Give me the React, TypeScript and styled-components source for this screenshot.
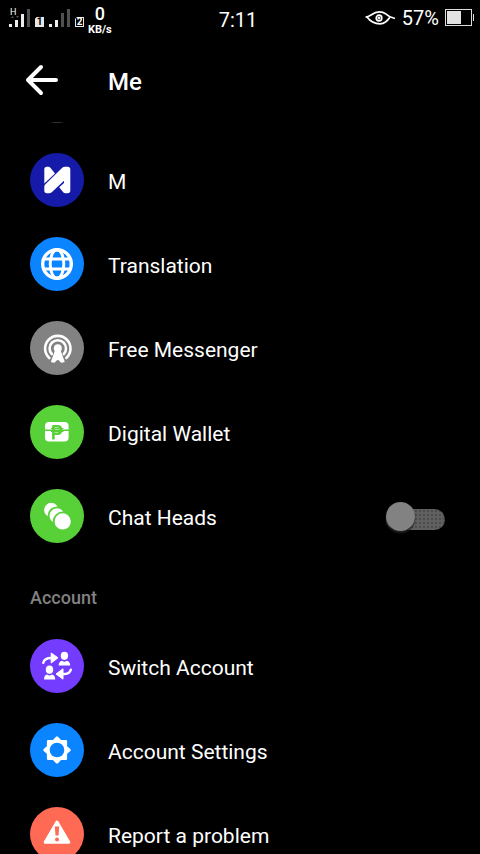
import React, { useState } from 'react';
import styled, { createGlobalStyle } from 'styled-components';

const GlobalStyle = createGlobalStyle`
  * { box-sizing: border-box; }
  body {
    margin: 0;
    background: #000;
    color: #fff;
    font-family: Roboto, "Liberation Sans", sans-serif;
  }
  button, input { font: inherit; color: inherit; margin: 0; }
`;

const Screen = styled.div`
  display: flex;
  flex-direction: column;
  height: 100vh;
  overflow: hidden;
`;

const StatusBar = styled.div`
  flex: none;
  display: grid;
  grid-template-columns: 1fr auto 1fr;
  align-items: center;
  height: 40px;
  padding: 0 6px 0 8px;
`;

const StatusGroup = styled.div<{ $end?: boolean }>`
  display: flex;
  align-items: center;
  justify-content: ${(p) => (p.$end ? 'flex-end' : 'flex-start')};
  gap: ${(p) => (p.$end ? '6px' : '4px')};
  height: 36px;
  align-self: start;
`;

const StatusText = styled.span`
  font-size: 20px;
  line-height: 24px;
`;

const Clock = styled(StatusText)`
  padding-right: 6px;
`;

const Signal = styled.span`
  position: relative;
  display: flex;
`;

const NetworkType = styled.span`
  position: absolute;
  left: 2px;
  top: -2px;
  font-size: 9px;
  line-height: 10px;
`;

const SimBadge = styled.span<{ $filled?: boolean }>`
  align-self: flex-end;
  width: 9px;
  margin-bottom: 9px;
  border: 1px solid #e8e8e8;
  background: ${(p) => (p.$filled ? '#e8e8e8' : '#000')};
  color: ${(p) => (p.$filled ? '#000' : '#fff')};
  font-size: 10px;
  font-weight: 700;
  line-height: 8px;
  text-align: center;
  clip-path: polygon(2px 0, 100% 0, 100% 100%, 0 100%, 0 2px);
`;

const NetSpeed = styled.span`
  display: flex;
  flex-direction: column;
  align-items: center;
  align-self: flex-start;
  padding-top: 3px;
  font-weight: 700;
  font-size: 11px;
  line-height: 12px;
`;

const NetSpeedValue = styled.span`
  font-size: 18px;
  font-weight: 500;
  line-height: 22px;
  margin-bottom: -2px;
`;

const NetSpeedUnit = styled.span`
  padding-top: 1px;
`;

const Header = styled.header`
  flex: none;
  display: flex;
  align-items: center;
  gap: 48px;
  height: 82px;
  padding: 0 24px;
`;

const BackButton = styled.button`
  display: flex;
  width: 36px;
  padding: 0;
  border: 0;
  background: none;
`;

const Title = styled.h1`
  margin: 2px 0 0;
  font-size: 24px;
  font-weight: 500;
  line-height: 28px;
`;

const List = styled.main`
  flex: 1;
  min-height: 0;
  overflow-y: auto;
  scrollbar-width: none;
`;

const ScrolledRow = styled.div`
  display: flex;
  align-items: flex-end;
  height: 16px;
  padding: 0 30px 15px;
  overflow: hidden;
`;

const rowStyles = `
  display: flex;
  align-items: center;
  gap: 24px;
  width: 100%;
  height: 84px;
  padding: 0 35px 0 30px;
  border: 0;
  background: none;
  text-align: left;
  cursor: pointer;
`;

const RowButton = styled.button`${rowStyles}`;
const RowLabel = styled.label`${rowStyles}`;

const RowText = styled.span`
  flex: 1;
  padding-top: 4px;
  font-size: 21px;
  line-height: 24px;
`;

const Disc = styled.span<{ $color: string }>`
  flex: none;
  display: flex;
  width: 54px;
  height: 54px;
  border-radius: 50%;
  background: ${(p) => p.$color};
`;

const SectionTitle = styled.h2`
  margin: 0;
  padding: 28px 30px 14px;
  color: #828282;
  font-size: 18px;
  font-weight: 500;
  line-height: 24px;
`;

const Switch = styled.input`
  appearance: none;
  flex: none;
  display: flex;
  align-items: center;
  width: 59px;
  height: 21px;
  margin-top: 6px;
  border-radius: 11px;
  background: radial-gradient(circle, #484848 20%, #606060 50%) 0 0 / 4px 4px;
  cursor: pointer;

  &::before {
    content: '';
    width: 29px;
    height: 29px;
    margin-top: -5px;
    border-radius: 50%;
    background: #828282;
    box-shadow: 0 2px 2px #222;
  }
  &:checked { background: #14539a; justify-content: flex-end; }
  &:checked::before { background: #0a84ff; }
`;

const Icon = ({ children }: { children: React.ReactNode }) => (
  <svg width="54" height="54" viewBox="0 0 54 54" fill="none" stroke="none" aria-hidden="true">
    {children}
  </svg>
);

const MIcon = () => (
  <Icon>
    <path fill="#fff" d="M14.300 16.500Q14.300 13.700 17 13.700H18.200Q19.600 13.700 20.600 14.900L25 20.400L14.300 30.400Z" />
    <path fill="#fff" d="M32 15Q33.300 13.700 35 13.700H37.500Q40.300 13.700 40.300 16.500V37.500Q40.300 40.300 37.500 40.300H35.500Q34 40.300 33 39L29.200 34.300L34 30V27.700L22 39Q20.700 40.300 19 40.300H17Q14.300 40.300 14.300 37.500V33.500Q14.300 32.300 15.200 31.400Z" />
  </Icon>
);

const GlobeIcon = () => (
  <Icon>
    <g stroke="#fff" strokeWidth="2.900">
      <circle cx="27" cy="27" r="14.300" strokeWidth="3.400" />
      <ellipse cx="27" cy="27" rx="6.800" ry="14.300" />
      <path d="M14 22H40M14 32H40" />
    </g>
  </Icon>
);

const BroadcastIcon = () => (
  <Icon>
    <g stroke="#fff" strokeWidth="2.600" strokeLinecap="round">
      <path d="M19.300 37A12.700 12.700 0 1 1 36.300 37" />
      <path d="M21.800 33A8.200 8.200 0 1 1 33.800 33" />
    </g>
    <circle cx="27.800" cy="27.300" r="4" fill="#fff" />
    <path fill="#fff" stroke="#fff" strokeWidth="1.600" strokeLinejoin="round" d="M25.800 29.500H29.800L33.800 40.500L31.500 41L27.800 37.500L24.100 41L21.800 40.500Z" />
  </Icon>
);

const WalletIcon = () => (
  <Icon>
    <path fill="#fff" d="M15 24.400V21Q15 17 19 17H34.500Q38.600 17 38.600 21V24.400ZM15 26H38.600V32.500Q38.600 36.400 34.500 36.400H19Q15 36.400 15 32.500Z" />
    <path stroke="#58d038" strokeWidth="2.600" strokeLinejoin="round" d="M23.400 34.400V21.300H27.500Q31 21.300 31 25T27.500 28.800H23.400" />
    <path stroke="#58d038" strokeWidth="1" d="M21 23.600H33.500M21 26.500H33.500" />
  </Icon>
);

const ChatHeadsIcon = () => (
  <Icon>
    <g fill="#fff" stroke="#58d038" strokeWidth="1.800">
      <circle cx="21.300" cy="21" r="8.100" />
      <circle cx="27" cy="26.700" r="8.400" />
      <circle cx="32.700" cy="32.400" r="9" />
    </g>
  </Icon>
);

const SwitchIcon = () => (
  <Icon>
    <g fill="#fff">
      <ellipse cx="34.400" cy="16.800" rx="3.700" ry="4.100" />
      <path d="M28.600 26.600Q28.800 22.300 32 21.800Q34.400 23.600 36.800 21.800Q40 22.300 40.200 26.600Z" />
      <ellipse cx="19.500" cy="30.700" rx="3.700" ry="4.100" />
      <path d="M14 40.400Q14.100 36.200 17.200 35.600Q19.500 37.400 21.900 35.600Q25.100 36.200 25.200 40.400Z" />
    </g>
    <g stroke="#fff" strokeWidth="2.500" strokeLinecap="round">
      <path d="M13.300 23.700Q14.500 19 21 19" />
      <path d="M40.800 30.700Q39.700 35 33.500 35" />
    </g>
    <path fill="#fff" stroke="#fff" strokeLinejoin="round" d="M21.200 14L28 18.800L21.200 24ZM33 29.800L26 35L33 40.200Z" />
  </Icon>
);

const GearIcon = () => (
  <Icon>
    <path
      fill="#fff"
      stroke="#fff"
      strokeWidth="2.600"
      strokeLinejoin="round"
      d="M27 14.600L30.400 18.200L35.800 18.200L35.800 23.600L39.400 27L35.800 30.400L35.800 35.800L30.400 35.800L27 39.400L23.600 35.800L18.200 35.800L18.200 30.400L14.600 27L18.200 23.600L18.200 18.200L23.600 18.200Z"
    />
    <circle cx="27" cy="27" r="7.300" fill="#0a84ff" />
  </Icon>
);

const WarningIcon = () => (
  <Icon>
    <path fill="#fff" stroke="#fff" strokeWidth="3" strokeLinejoin="round" d="M27 15L38.800 35.200H15.200Z" />
    <path fill="#ff6a55" d="M24.800 19.500H29.200L28.500 28.500H25.500Z" />
    <circle cx="27" cy="32.400" r="2" fill="#ff6a55" />
  </Icon>
);

const SignalBars = ({ lit }: { lit: number }) => (
  <svg width="23" height="18" viewBox="0 0 23 18" aria-hidden="true">
    {[3, 7, 14, 18].map((h, i) => (
      <rect key={h} x={1 + i * 6} y={18 - h} width="3" height={h} fill={i < lit ? '#eee' : '#505050'} />
    ))}
  </svg>
);

const EyeIcon = () => (
  <svg width="31" height="14" viewBox="0 0 31 14" fill="none" stroke="#fff" strokeWidth="1.700" aria-hidden="true">
    <path d="M0.500 6Q3 6 6 4Q14 -1.500 21 3Q24 6 30 7.500M2 6Q7 12.800 15 12.800Q21 12.500 25 6" />
    <circle cx="14" cy="7" r="2.800" />
    <circle cx="14" cy="7" r="0.600" />
  </svg>
);

const BatteryIcon = () => (
  <svg width="29" height="18" viewBox="0 0 29 18" fill="none" aria-hidden="true">
    <rect x="0.500" y="0.500" width="26" height="16" stroke="#ddd" />
    <rect x="2" y="2" width="14" height="13" fill="#e2e2e2" />
    <path d="M28.500 5V12" stroke="#ddd" />
  </svg>
);

const features = [
  { name: 'M', color: '#151ba8', icon: <MIcon /> },
  { name: 'Translation', color: '#0a84ff', icon: <GlobeIcon /> },
  { name: 'Free Messenger', color: '#828282', icon: <BroadcastIcon /> },
  { name: 'Digital Wallet', color: '#58d038', icon: <WalletIcon /> },
];

const account = [
  { name: 'Switch Account', color: '#743cff', icon: <SwitchIcon /> },
  { name: 'Account Settings', color: '#0a84ff', icon: <GearIcon /> },
  { name: 'Report a problem', color: '#ff6a55', icon: <WarningIcon /> },
];

const MenuRow = ({ name, color, icon }: { name: string; color: string; icon: React.ReactNode }) => (
  <RowButton type="button">
    <Disc $color={color}>{icon}</Disc>
    <RowText>{name}</RowText>
  </RowButton>
);

export default function App() {
  const [chatHeads, setChatHeads] = useState(false);
  return (
    <Screen>
      <GlobalStyle />
      <StatusBar>
        <StatusGroup>
          <Signal>
            <NetworkType>H</NetworkType>
            <svg width="23" height="18" viewBox="0 0 23 18" aria-hidden="true">
              <path fill="#eee" d="M1 15h3v3h-3zM7 11h3v7h-3zM13 5h3v13h-3z" />
              <path fill="#505050" d="M19 0h3v18h-3zM3 9l1.500-2l1.500 2zM8 7h3l-1.500 2z" />
            </svg>
          </Signal>
          <SimBadge $filled>1</SimBadge>
          <Signal><SignalBars lit={2} /></Signal>
          <SimBadge>2</SimBadge>
          <NetSpeed>
            <NetSpeedValue>0</NetSpeedValue>
            <NetSpeedUnit>KB/s</NetSpeedUnit>
          </NetSpeed>
        </StatusGroup>
        <Clock>7:11</Clock>
        <StatusGroup $end>
          <EyeIcon />
          <StatusText>57%</StatusText>
          <BatteryIcon />
        </StatusGroup>
      </StatusBar>
      <Header>
        <BackButton type="button" aria-label="Back">
          <svg width="36" height="36" viewBox="0 0 36 36" fill="none" stroke="#fff" strokeWidth="4" strokeLinecap="round" strokeLinejoin="round" aria-hidden="true">
            <path d="M17 4L4 17L17 30M4 17H32" />
          </svg>
        </BackButton>
        <Title>Me</Title>
      </Header>
      <List>
        <ScrolledRow>
          <Disc $color="#383838" />
        </ScrolledRow>
        {features.map((item) => <MenuRow key={item.name} {...item} />)}
        <RowLabel>
          <Disc $color="#58d038"><ChatHeadsIcon /></Disc>
          <RowText>Chat Heads</RowText>
          <Switch
            type="checkbox"
            role="switch"
            checked={chatHeads}
            onChange={(e) => setChatHeads(e.target.checked)}
          />
        </RowLabel>
        <SectionTitle>Account</SectionTitle>
        {account.map((item) => <MenuRow key={item.name} {...item} />)}
      </List>
    </Screen>
  );
}
